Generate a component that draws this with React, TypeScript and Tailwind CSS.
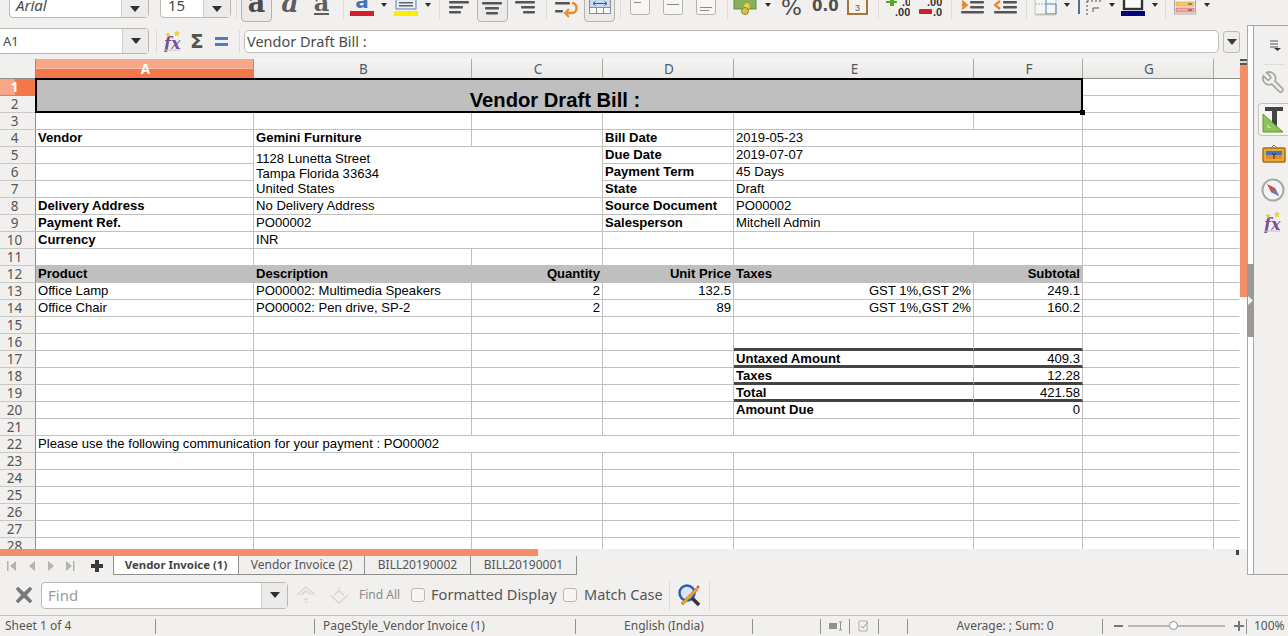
import React from 'react';

// Calc window: toolbars, formula bar, sheet grid, sheet tabs, find bar, status bar

type Cell = { t?: string; cs?: number; rs?: number; b?: boolean; r?: boolean; fill?: boolean; heavy?: boolean; multi?: boolean };

const COLS = [
  { n: 'A', w: 218 },
  { n: 'B', w: 218 },
  { n: 'C', w: 131 },
  { n: 'D', w: 131 },
  { n: 'E', w: 240 },
  { n: 'F', w: 109 },
  { n: 'G', w: 131 },
  { n: '', w: 26 },
];

const e: Cell = {};
const G: Cell[] = [e, e];

const ROWS: Record<number, Cell[]> = {
  3: [e, e, e, e, e, e, ...G],
  4: [{ t: 'Vendor', b: true }, { t: 'Gemini Furniture', b: true }, e, { t: 'Bill Date', b: true }, { t: '2019-05-23', cs: 2 }, ...G],
  5: [e, { t: '1128 Lunetta Street\nTampa Florida 33634\nUnited States', cs: 2, rs: 3, multi: true }, { t: 'Due Date', b: true }, { t: '2019-07-07', cs: 2 }, ...G],
  6: [e, { t: 'Payment Term', b: true }, { t: '45 Days', cs: 2 }, ...G],
  7: [e, { t: 'State', b: true }, { t: 'Draft', cs: 2 }, ...G],
  8: [{ t: 'Delivery Address', b: true }, { t: 'No Delivery Address', cs: 2 }, { t: 'Source Document', b: true }, { t: 'PO00002', cs: 2 }, ...G],
  9: [{ t: 'Payment Ref.', b: true }, { t: 'PO00002', cs: 2 }, { t: 'Salesperson', b: true }, { t: 'Mitchell Admin', cs: 2 }, ...G],
  10: [{ t: 'Currency', b: true }, { t: 'INR', cs: 2 }, e, e, e, ...G],
  11: [e, e, e, e, e, e, ...G],
  12: [
    { t: 'Product', b: true, fill: true },
    { t: 'Description', b: true, fill: true },
    { t: 'Quantity', b: true, r: true, fill: true },
    { t: 'Unit Price', b: true, r: true, fill: true },
    { t: 'Taxes', b: true, fill: true },
    { t: 'Subtotal', b: true, r: true, fill: true },
    ...G,
  ],
  13: [{ t: 'Office Lamp' }, { t: 'PO00002: Multimedia Speakers' }, { t: '2', r: true }, { t: '132.5', r: true }, { t: 'GST 1%,GST 2%', r: true }, { t: '249.1', r: true }, ...G],
  14: [{ t: 'Office Chair' }, { t: 'PO00002: Pen drive, SP-2' }, { t: '2', r: true }, { t: '89', r: true }, { t: 'GST 1%,GST 2%', r: true }, { t: '160.2', r: true }, ...G],
  15: [e, e, e, e, e, e, ...G],
  16: [e, e, e, e, { heavy: true }, { heavy: true }, ...G],
  17: [e, e, e, e, { t: 'Untaxed Amount', b: true, heavy: true }, { t: '409.3', r: true, heavy: true }, ...G],
  18: [e, e, e, e, { t: 'Taxes', b: true, heavy: true }, { t: '12.28', r: true, heavy: true }, ...G],
  19: [e, e, e, e, { t: 'Total', b: true, heavy: true }, { t: '421.58', r: true, heavy: true }, ...G],
  20: [e, e, e, e, { t: 'Amount Due', b: true }, { t: '0', r: true }, ...G],
  21: [e, e, e, e, e, e, ...G],
  22: [{ t: 'Please use the following communication for your payment : PO00002', cs: 6 }, ...G],
};

function Sep({ className }: { className: string }) {
  return <div className={`w-px h-[19px] shrink-0 bg-[#dcdbd8] ${className}`} />;
}

function Ic({ w, className, children }: { w: number; className?: string; children: React.ReactNode }) {
  return (
    <svg width={w} height={24} viewBox={`0 0 ${w} 24`} className={`shrink-0 ${className ?? ''}`}>
      {children}
    </svg>
  );
}

function Arrow({ className }: { className: string }) {
  return (
    <Ic w={8} className={className}>
      <path d="M1 3h6L4 7z" fill="#2e2e2e" />
    </Ic>
  );
}

function Active({ className, children }: { className: string; children: React.ReactNode }) {
  return <div className={`relative shrink-0 w-[31px] h-[23px] -mt-px rounded-b-[4px] border border-[#b4b3b0] bg-[#ebeae8] ${className}`}>{children}</div>;
}

function Lines({ w, xs }: { w: number; xs: [number, number][] }) {
  return (
    <Ic w={w}>
      {xs.map(([x, l], i) => (
        <rect key={i} x={x} y={1 + i * 5} width={l} height={2.4} rx={1} fill="#555" />
      ))}
    </Ic>
  );
}

function VBox({ y, l }: { y: number; l: number }) {
  return (
    <Ic w={20}>
      <rect x={0.5} y={-4} width={19} height={18.5} rx={2} fill="#f7f6f5" stroke="#b3b2af" />
      <rect x={4} y={y} width={l} height={1} fill="#8a8a8a" />
      {y > 4 && <rect x={4} y={y + 3} width={l - 3} height={1} fill="#8a8a8a" />}
    </Ic>
  );
}

function FxIcon() {
  return (
    <svg width={20} height={22} viewBox="0 0 20 22" className="shrink-0">
      <path d="M5 2l.8 1.8 1.9.2-1.4 1.3.4 1.9L5 6.2 3.3 7.2l.4-1.9L2.3 4l1.9-.2z" fill="#e8c93a" />
      <path d="M14 0l1 2.2 2.4.3-1.8 1.6.5 2.4L14 5.3l-2.1 1.2.5-2.4-1.8-1.6 2.4-.3z" fill="#e8d33a" />
      <text x={1} y={19} fontFamily="'DejaVu Serif', serif" fontStyle="italic" fontWeight="bold" fontSize={16} fill="#7b4e98">
        fx
      </text>
      <rect x={1} y={19.6} width={16} height={1} fill="#c9bdd0" />
    </svg>
  );
}

function Toolbar() {
  return (
    <div className="flex items-start h-[25px] shrink-0 overflow-hidden">
      <div className="ml-[9px] -mt-[6px] flex w-[140px] h-[24px] shrink-0 rounded-[4px] border border-[#b9b8b5] bg-white">
        <span className="flex-1 pl-[6px] pt-[1px] text-[15px] italic leading-[18px] text-[#4a4a4a]">Arial</span>
        <span className="flex w-[27px] items-center justify-center border-l border-[#cfcecb] bg-[#ecebe9] pt-[6px]">
          <svg width={10} height={6}><path d="M0 0h10L5 6z" fill="#2e2e2e" /></svg>
        </span>
      </div>
      <div className="ml-[11px] -mt-[6px] flex w-[71px] h-[24px] shrink-0 rounded-[4px] border border-[#b9b8b5] bg-white">
        <span className="flex-1 pl-[7px] pt-[1px] text-[15px] leading-[18px] text-[#4a4a4a]">15</span>
        <span className="flex w-[27px] items-center justify-center border-l border-[#cfcecb] bg-[#ecebe9] pt-[6px]">
          <svg width={10} height={6}><path d="M0 0h10L5 6z" fill="#2e2e2e" /></svg>
        </span>
      </div>
      <Sep className="ml-[5px]" />
      <Active className="ml-[4px]">
        <svg width={29} height={22} className="block">
          <text x={14.5} y={12} textAnchor="middle" fontFamily="'DejaVu Serif', serif" fontWeight="bold" fontSize={27} fill="#4b4b4b">a</text>
        </svg>
      </Active>
      <Ic w={31} className="ml-[3px]">
        <text x={15} y={12} textAnchor="middle" fontFamily="'DejaVu Serif', serif" fontStyle="italic" fontWeight="bold" fontSize={27} fill="#5e5e5e">a</text>
      </Ic>
      <Ic w={31}>
        <text x={15.5} y={11} textAnchor="middle" fontFamily="'DejaVu Serif', serif" fontWeight="bold" fontSize={24} fill="#5e5e5e">a</text>
        <rect x={8} y={13} width={15} height={2} fill="#5e5e5e" />
      </Ic>
      <Sep className="ml-[6px]" />
      <Ic w={24} className="ml-[6px]">
        <text x={12} y={8} textAnchor="middle" fontFamily="'DejaVu Sans', sans-serif" fontWeight="bold" fontSize={20} fill="#3f78b8">a</text>
        <rect x={0} y={11} width={24} height={5} fill="#d3202c" />
      </Ic>
      <Arrow className="ml-[6px]" />
      <Ic w={24} className="ml-[6px]">
        <rect x={2} y={-3} width={20} height={12} fill="#e8eef5" stroke="#5d82ab" />
        <rect x={5} y={2} width={14} height={1.5} fill="#666" />
        <rect x={5} y={5} width={14} height={1.5} fill="#666" />
        <rect x={0} y={11} width={24} height={5} fill="#ffec00" />
      </Ic>
      <Arrow className="ml-[6px]" />
      <Sep className="ml-[7px]" />
      <div className="ml-[9px]"><Lines w={20} xs={[[0, 20], [0, 14], [0, 12]]} /></div>
      <Active className="ml-[8px]">
        <div className="pl-[4px] pt-px"><Lines w={20} xs={[[0, 20], [3, 14], [4, 12]]} /></div>
      </Active>
      <div className="ml-[7px]"><Lines w={20} xs={[[0, 20], [6, 14], [8, 12]]} /></div>
      <Sep className="ml-[11px]" />
      <Ic w={23} className="ml-[8px]">
        <rect x={0} y={2} width={15} height={2.4} rx={1} fill="#555" />
        <rect x={0} y={10} width={8} height={2.4} rx={1} fill="#555" />
        <path d="M17 3c6 0 6 10 0 10h-5" fill="none" stroke="#e8872c" strokeWidth={2.4} />
        <path d="M14 9l-4 4 4 4" fill="none" stroke="#e8872c" strokeWidth={2} />
      </Ic>
      <Active className="ml-[6px]">
        <svg width={29} height={22} className="block">
          <rect x={4.5} y={-3} width={21} height={16.5} fill="#f8f8f8" stroke="#8f8f8f" />
          <rect x={5} y={-2} width={20} height={9} fill="#c8daef" />
          <path d="M5 7.5h20M11.5 8v6M18.5 8v6" stroke="#8f8f8f" />
          <path d="M8 3.5h14M8 3.5l2.5-2M8 3.5l2.5 2M22 3.5l-2.5-2M22 3.5l-2.5 2" stroke="#2a62a8" fill="none" />
        </svg>
      </Active>
      <Sep className="ml-[5px]" />
      <div className="ml-[9px]"><VBox y={2} l={7} /></div>
      <div className="ml-[13px]"><VBox y={4} l={12} /></div>
      <div className="ml-[13px]"><VBox y={7} l={12} /></div>
      <Sep className="ml-[11px]" />
      <Ic w={24} className="ml-[5px]">
        <rect x={1} y={-4} width={22} height={13} fill="#86b35a" stroke="#5f8f3a" />
        <circle cx={14} cy={6} r={3.5} fill="#e3d25a" stroke="#a89a32" />
        <circle cx={12} cy={11} r={3.5} fill="#d8c24a" stroke="#93822a" />
      </Ic>
      <Arrow className="ml-[7px]" />
      <span className="ml-[9px] w-[23px] shrink-0 -mt-[2px] text-[22px] leading-[20px] text-[#4a4a4a] [font-family:'DejaVu_Sans',sans-serif]">%</span>
      <span className="ml-[8px] w-[24px] shrink-0 -mt-[1px] text-[15px] font-bold leading-[14px] text-[#4f4f4f] [font-family:'DejaVu_Sans',sans-serif]">0.0</span>
      <Ic w={21} className="ml-[11px]">
        <rect x={1} y={-4} width={19} height={18} fill="#f4f2ee" stroke="#a5763c" strokeWidth={2} />
        <text x={10.5} y={11} textAnchor="middle" fontSize={9} fontFamily="'Liberation Sans', sans-serif" fill="#555">3</text>
      </Ic>
      <Sep className="ml-[10px]" />
      <Ic w={24} className="ml-[7px]">
        <path d="M4 -2h4v3h-4zM0 1h11v2H8v3H4V3H0z" fill="#56a820" />
        <text x={16} y={6} fontSize={11} fontFamily="'Liberation Sans', sans-serif" fill="#333" fontWeight="bold">.0</text>
        <text x={9} y={16} fontSize={11} fontFamily="'Liberation Sans', sans-serif" fill="#333" fontWeight="bold">.00</text>
      </Ic>
      <Ic w={24} className="ml-[8px]">
        <text x={9} y={6} fontSize={11} fontFamily="'Liberation Sans', sans-serif" fill="#333" fontWeight="bold">.00</text>
        <rect x={1} y={9} width={13} height={5} rx={1} fill="#cf1f27" />
        <text x={15} y={16} fontSize={11} fontFamily="'Liberation Sans', sans-serif" fill="#333" fontWeight="bold">.0</text>
      </Ic>
      <Sep className="ml-[9px]" />
      <Ic w={24} className="ml-[9px]">
        <path d="M1 1l5 4-5 4M1 4l3 1-3 1" fill="none" stroke="#e8872c" strokeWidth={2} />
        <rect x={9} y={1} width={14} height={2.4} rx={1} fill="#555" />
        <rect x={9} y={6} width={14} height={2.4} rx={1} fill="#555" />
        <rect x={0} y={11} width={23} height={2.4} rx={1} fill="#555" />
      </Ic>
      <Ic w={24} className="ml-[9px]">
        <path d="M6 1L1 5l5 4" fill="none" stroke="#e8872c" strokeWidth={2.4} />
        <rect x={9} y={1} width={14} height={2.4} rx={1} fill="#555" />
        <rect x={9} y={6} width={14} height={2.4} rx={1} fill="#555" />
        <rect x={0} y={11} width={23} height={2.4} rx={1} fill="#555" />
      </Ic>
      <Sep className="ml-[8px]" />
      <Ic w={23} className="ml-[7px]">
        <rect x={1} y={-4} width={21} height={18} fill="#f4f6f3" stroke="#c4c4c0" />
        <path d="M12 -4v18M12 14h10V4H12" fill="none" stroke="#4f83b8" />
        <path d="M1 4h10" stroke="#9ab4cf" strokeDasharray="2 1" />
        <rect x={1} y={14} width={21} height={1.4} fill="#bdbdb9" />
      </Ic>
      <Arrow className="ml-[6px]" />
      <div className="ml-[7px] w-[2px] h-[14px] shrink-0 bg-[#4f6f96]" />
      <Ic w={18} className="ml-[6px]">
        <path d="M1 1h16M1 1v14" fill="none" stroke="#444" strokeDasharray="2 2" />
        <path d="M7 12V8h6" fill="none" stroke="#555" />
      </Ic>
      <Arrow className="ml-[4px]" />
      <Ic w={24} className="ml-[5px]">
        <rect x={3} y={-4} width={18} height={13} fill="#fafafa" stroke="#333" strokeWidth={2.4} />
        <rect x={0} y={11} width={24} height={5} fill="#000080" />
      </Ic>
      <Arrow className="ml-[6px]" />
      <Sep className="ml-[6px]" />
      <Ic w={22} className="ml-[8px]">
        <rect x={0.5} y={-3} width={21} height={17} fill="#f5f5f3" stroke="#a9a9a6" />
        <rect x={2} y={2} width={18} height={4} fill="#f7c66d" stroke="#e39a2f" strokeWidth={0.6} />
        <rect x={2} y={8} width={18} height={4} fill="#f7a7a7" stroke="#d9534f" strokeWidth={0.6} />
        <rect x={14} y={3.5} width={4} height={1} fill="#444" />
        <rect x={14} y={9.5} width={4} height={1} fill="#444" />
      </Ic>
      <Arrow className="ml-[7px]" />
    </div>
  );
}

function FormulaBar() {
  return (
    <div className="flex items-start h-[34px] shrink-0 pt-[3px]">
      <div className="flex w-[149px] h-[26px] shrink-0 rounded-r-[4px] border border-l-0 border-[#b9b8b5] bg-white">
        <span className="flex-1 pl-[3px] text-[13px] leading-[24px] text-[#4a4a4a]">A1</span>
        <span className="flex w-[26px] items-center justify-center border-l border-[#cfcecb] bg-[#ecebe9]">
          <svg width={10} height={6}><path d="M0 0h10L5 6z" fill="#2e2e2e" /></svg>
        </span>
      </div>
      <Sep className="ml-[7px] mt-[2px] !h-[23px]" />
      <div className="ml-[6px] mt-[2px]"><FxIcon /></div>
      <span className="ml-[7px] w-[14px] shrink-0 text-[20px] font-bold leading-[26px] text-[#4f5650] [font-family:'DejaVu_Sans',sans-serif]">Σ</span>
      <svg width={14} height={12} className="ml-[11px] mt-[8px] shrink-0">
        <rect y={1} width={13} height={3} fill="#4f80b5" />
        <rect y={7} width={13} height={3} fill="#4f80b5" />
      </svg>
      <Sep className="ml-[10px] mt-[2px] !h-[23px]" />
      <div className="ml-[4px] mt-[2px] flex-1 h-[23px] rounded-[5px] border border-[#bdbcb9] bg-white pl-[2px] text-[14.5px] leading-[21px] text-[#4a4a4a]">
        Vendor Draft Bill :
      </div>
      <div className="ml-[4px] mr-[7px] mt-[3px] flex w-[17px] h-[22px] shrink-0 items-center justify-center rounded-[3px] border border-[#bdbcb9] bg-[#eeedeb]">
        <svg width={10} height={6}><path d="M0 0h10L5 6z" fill="#3a3a3a" /></svg>
      </div>
    </div>
  );
}

function RowHead({ n }: { n: number }) {
  const on = n === 1;
  return (
    <td
      className={`h-[17px] p-0 pr-[6px] text-center align-top text-[13.5px] leading-[16px] border-r border-b [font-family:'Noto_Sans',sans-serif] ${
        on
          ? 'font-bold text-white border-[#f2774a] bg-[linear-gradient(90deg,#f7a788_0,#f7a788_15px,#f2774a_15px)]'
          : 'text-[#555] border-r-[#8f8f8d] border-b-[#c9c8c5] bg-[#f1f0ee]'
      }`}
    >
      {n}
    </td>
  );
}

function DataCell({ c, last }: { c: Cell; last: boolean }) {
  const border = c.heavy ? 'border-b-[3px] border-b-[#444]' : c.fill ? 'border-b-[#bfbfbf]' : 'border-b-[#c0c0c0]';
  const right = last ? 'border-r-transparent' : c.fill ? 'border-r-[#bfbfbf]' : 'border-r-[#c0c0c0]';
  return (
    <td
      colSpan={c.cs}
      rowSpan={c.rs}
      className={`h-[17px] p-0 px-[2px] overflow-hidden whitespace-pre text-[13.1px] text-black border-r border-b ${border} ${right} ${
        c.multi ? 'align-middle pt-[2px] leading-[15px]' : 'align-top leading-[16px]'
      } ${c.b ? 'font-bold' : ''} ${c.r ? 'text-right' : ''} ${c.fill ? 'bg-[#bfbfbf]' : 'bg-white'}`}
    >
      {c.heavy ? <div className="h-[14px]">{c.t}</div> : c.t}
    </td>
  );
}

function Sheet() {
  const nums = Array.from({ length: 26 }, (_, i) => i + 3);
  return (
    <div className="flex h-[490px] shrink-0">
      <div className="w-[1240px] overflow-hidden bg-white">
        <table className="table-fixed border-separate border-spacing-0 w-[1240px] [font-family:'Liberation_Sans',sans-serif]">
          <colgroup>
            <col className="w-[36px]" />
            {COLS.map((c, i) => (
              <col key={i} style={{ width: c.w }} />
            ))}
          </colgroup>
          <thead>
            <tr>
              <th className="h-[20px] p-0 border-r border-b border-[#8f8f8d] bg-[#f1f0ee]" />
              {COLS.map((c) => (
                <th
                  key={c.n}
                  className={`h-[20px] p-0 pl-[2px] text-center text-[13.5px] leading-[18px] border-b border-b-[#8f8f8d] [font-family:'Noto_Sans',sans-serif] ${
                    c.n === 'A'
                      ? 'font-bold text-white border-r border-r-[#f2774a] bg-[linear-gradient(180deg,#f7a788_0,#f7a788_9px,#fbd3c2_10px,#f2774a_10px)]'
                      : c.n === ''
                        ? 'bg-[#f1f0ee]'
                        : 'font-normal text-[#4d5a68] border-r border-r-[#a9a8a5] bg-[linear-gradient(180deg,#f5f4f2,#e9e8e6)]'
                  }`}
                >
                  {c.n}
                </th>
              ))}
            </tr>
          </thead>
          <tbody>
            <tr>
              <RowHead n={1} />
              <td colSpan={6} rowSpan={2} className="relative p-0 pr-[9px] pt-[7px] text-center align-middle bg-[#bfbfbf] text-[20.2px] font-bold leading-[24px] text-black">
                Vendor Draft Bill :
                <div className="absolute -left-px -top-px right-0 bottom-0 border-2 border-black" />
                <div className="absolute -right-[2px] -bottom-[2px] w-[5px] h-[5px] bg-black" />
              </td>
              <DataCell c={e} last={false} />
              <DataCell c={e} last />
            </tr>
            <tr>
              <RowHead n={2} />
              <DataCell c={e} last={false} />
              <DataCell c={e} last />
            </tr>
            {nums.map((n) => {
              const cells = ROWS[n] ?? [e, e, e, e, e, e, e, e];
              return (
                <tr key={n}>
                  <RowHead n={n} />
                  {cells.map((c, i) => (
                    <DataCell key={i} c={c} last={i === cells.length - 1} />
                  ))}
                </tr>
              );
            })}
          </tbody>
        </table>
      </div>
      <div className="relative w-[7px] bg-white">
        <div className="h-[6px] bg-[#d8d7d4] border-y-2 border-[#555]" />
        <div className="h-[232px] bg-[#f28f68]" />
      </div>
    </div>
  );
}

function TabNav({ d, className }: { d: string; className: string }) {
  return (
    <svg width={10} height={12} className={`shrink-0 ${className}`}>
      <path d={d} fill="#b4b3b0" />
    </svg>
  );
}

function SheetTabs() {
  return (
    <div className="flex h-[19px] shrink-0 items-center [font-family:'Noto_Sans',sans-serif]">
      <TabNav d="M0 1h1.5v10H0zM9 1v10L3 6z" className="ml-[7px]" />
      <TabNav d="M8 1v10L2 6z" className="ml-[10px]" />
      <TabNav d="M2 1v10l6-5z" className="ml-[9px]" />
      <TabNav d="M1 1v10l6-5zM8 1h1.5v10H8z" className="ml-[9px]" />
      <svg width={14} height={14} className="ml-[15px] shrink-0">
        <path d="M5 1h4v4h4v4H9v4H5V9H1V5h4z" fill="#3a3a3a" />
      </svg>
      <div className="ml-[9px] flex w-[126px] h-[19px] shrink-0 items-center justify-center border-x border-b border-[#8f8f8d] bg-white text-[11.4px] font-bold text-[#444]">
        Vendor Invoice (1)
      </div>
      <div className="flex w-[126px] h-[19px] shrink-0 items-center justify-center border-r border-b border-[#8f8f8d] text-[12px] text-[#555]">Vendor Invoice (2)</div>
      <div className="flex w-[106px] h-[19px] shrink-0 items-center justify-center border-r border-b border-[#8f8f8d] text-[12px] text-[#555]">BILL20190002</div>
      <div className="flex w-[106px] h-[19px] shrink-0 items-center justify-center border-r border-b border-[#8f8f8d] text-[12px] text-[#555]">BILL20190001</div>
    </div>
  );
}

function Sidebar() {
  return (
    <div className="flex flex-col w-[34px] border-y border-[#a9a8a5]">
      <svg width={34} height={12} className="shrink-0 mt-[14px]">
        <path d="M16 1h8M16 4h8M16 7h8" stroke="#4a5560" strokeWidth={1.2} />
        <path d="M20 8h7l-3.5 3z" fill="#2e3a48" />
      </svg>
      <div className="ml-[9px] mt-[12px] h-px w-[22px] bg-[#dddcd9]" />
      <svg width={34} height={28} viewBox="0 0 34 28" className="shrink-0 mt-[4px]">
        <g transform="translate(32 1) scale(-1.05 1.05)">
          <path
            d="M14.7 6.3a1 1 0 0 0 0 1.4l1.6 1.6a1 1 0 0 0 1.4 0l3.77-3.77a6 6 0 0 1-7.94 7.94l-6.91 6.91a2.12 2.12 0 0 1-3-3l6.91-6.91a6 6 0 0 1 7.94-7.94l-3.76 3.76z"
            fill="#f1f0ee"
            stroke="#a8a8a5"
            strokeWidth={1.7}
          />
        </g>
      </svg>
      <div className="ml-[4px] mt-[6px] h-[33px] rounded-l-[4px] border border-r-0 border-[#c3c2bf] bg-[#f6f5f4]">
        <svg width={30} height={31}>
          <rect x={6} y={3} width={18} height={4} fill="#444" />
          <rect x={13} y={3} width={5} height={20} fill="#444" />
          <path d="M4 10v18h20z" fill="#8fc25a" stroke="#5f9a2e" />
          <path d="M8 20v4h5z" fill="#b9dc94" />
        </svg>
      </div>
      <svg width={34} height={26} className="shrink-0 mt-[7px]">
        <path d="M17 5l3-3 3 3" fill="none" stroke="#777" />
        <rect x={9} y={5} width={22} height={14} rx={1} fill="#e9a93c" stroke="#a56d1a" strokeWidth={1.5} />
        <rect x={12} y={8} width={16} height={8} fill="#3f78b8" />
        <rect x={12} y={12} width={16} height={4} fill="#e8872c" />
        <path d="M20 16v-5M18 10l2 2 2-2" stroke="#3a2a1a" fill="none" />
      </svg>
      <svg width={34} height={26} className="shrink-0 mt-[8px]">
        <circle cx={19} cy={13} r={10.5} fill="#f4f4f3" stroke="#a8a8a5" strokeWidth={2} />
        <path d="M13 7l4 8 8 4-4-8z" fill="#d94a4a" />
        <path d="M17 15l8 4-4-8z" fill="#5b7fbf" />
      </svg>
      <div className="ml-[9px] mt-[8px]"><FxIcon /></div>
    </div>
  );
}

function FindBar() {
  return (
    <div className="flex items-center h-[41px] shrink-0 border-b border-[#c4c3c0] [font-family:'Noto_Sans',sans-serif]">
      <svg width={18} height={18} className="ml-[15px] shrink-0">
        <path d="M3 1l6 5.5L15 1l2 2-5.5 6L17 15l-2 2-6-5.5L3 17l-2-2 5.5-6L1 3z" fill="#777" stroke="#666" strokeWidth={0.5} />
      </svg>
      <div className="ml-[8px] flex w-[247px] h-[27px] shrink-0 rounded-[4px] border border-[#b9b8b5] bg-white">
        <span className="flex-1 pl-[6px] text-[15px] leading-[25px] text-[#9b9b9b]">Find</span>
        <span className="flex w-[26px] items-center justify-center border-l border-[#cfcecb] bg-[#ecebe9]">
          <svg width={10} height={6}><path d="M0 0h10L5 6z" fill="#2e2e2e" /></svg>
        </span>
      </div>
      <svg width={20} height={20} className="ml-[8px] shrink-0">
        <path d="M1 10l9-8 9 8M5 10l5-4 5 4M8 14h4M9 17h2" fill="none" stroke="#d8d7d4" strokeWidth={1.5} />
      </svg>
      <svg width={20} height={20} className="ml-[13px] shrink-0">
        <path d="M1 10l9 8 9-8M5 10l5-4 5 4M8 6h4M9 3h2" fill="none" stroke="#d8d7d4" strokeWidth={1.5} />
      </svg>
      <span className="ml-[10px] w-[45px] shrink-0 text-[12px] text-[#8b8b8b]">Find All</span>
      <span className="ml-[7px] w-[14px] h-[14px] shrink-0 rounded-[3px] border border-[#b9b8b5] bg-[#f7f6f5]" />
      <span className="ml-[6px] w-[127px] shrink-0 text-[14.6px] text-[#555] whitespace-nowrap">Formatted Display</span>
      <span className="ml-[5px] w-[14px] h-[14px] shrink-0 rounded-[3px] border border-[#b9b8b5] bg-[#f7f6f5]" />
      <span className="ml-[7px] w-[80px] shrink-0 text-[14.5px] text-[#555] whitespace-nowrap">Match Case</span>
      <div className="ml-[5px] w-px h-[29px] bg-[#dcdbd8]" />
      <svg width={24} height={24} className="ml-[7px] shrink-0">
        <circle cx={10} cy={10} r={7.5} fill="#dce6f2" stroke="#2f5fa8" strokeWidth={2.5} />
        <path d="M15 15l7 7" stroke="#333" strokeWidth={3.5} />
        <path d="M4 20L19 5l2 2L6 22z" fill="#f0a030" stroke="#b86f10" strokeWidth={0.6} />
        <circle cx={21} cy={4} r={1.5} fill="#e0503c" />
      </svg>
      <div className="ml-[8px] w-px h-[29px] bg-[#dcdbd8]" />
    </div>
  );
}

function StatusBar() {
  const cell = 'flex h-[15px] shrink-0 items-center border-r border-[#8f8f8d] whitespace-nowrap';
  return (
    <div className="flex items-center h-[20px] shrink-0 text-[12px] text-[#555] [font-family:'Noto_Sans',sans-serif]">
      <div className={`${cell} w-[156px] pl-[5px]`}>Sheet 1 of 4</div>
      <div className={`${cell} w-[159px]`} />
      <div className={`${cell} w-[261px] pl-[8px]`}>PageStyle_Vendor Invoice (1)</div>
      <div className={`${cell} w-[177px] justify-center`}>English (India)</div>
      <div className={`${cell} w-[68px]`} />
      <div className={`${cell} w-[29px] justify-center`}>
        <svg width={13} height={10}>
          <rect y={2} width={8} height={6} fill="#8f8f8d" />
          <path d="M10 1h3M11.5 1v8M10 9h3" stroke="#8f8f8d" fill="none" />
        </svg>
      </div>
      <div className={`${cell} w-[29px] justify-center`}>
        <svg width={12} height={12}>
          <path d="M1 1h8v10H1z" fill="none" stroke="#b0afac" />
          <path d="M3 6l2 2 5-6" fill="none" stroke="#9a9a98" />
        </svg>
      </div>
      <div className={`${cell} w-[29px]`} />
      <div className={`${cell} w-[195px] justify-center`}>Average: ; Sum: 0</div>
      <div className={`${cell} w-[144px] pl-[11px]`}>
        <div className="w-[9px] h-[2px] bg-[#777]" />
        <div className="relative ml-[5px] w-[97px] h-[2px] bg-[#b9b8b5]">
          <div className="absolute left-[41px] -top-[4px] w-[9px] h-[9px] rounded-full border border-[#8f8f8d] bg-white" />
        </div>
        <svg width={10} height={10} className="ml-[9px] shrink-0">
          <path d="M4 0h2v4h4v2H6v4H4V6H0V4h4z" fill="#777" />
        </svg>
      </div>
      <div className="pl-[7px]">100%</div>
    </div>
  );
}

export default function App() {
  return (
    <div className="flex flex-col w-[1288px] h-[636px] overflow-hidden bg-[#f1f0ee] [font-family:'Noto_Sans',sans-serif]">
      <Toolbar />
      <div className="flex h-[550px] shrink-0">
        <div className="flex flex-col w-[1247px] shrink-0">
          <FormulaBar />
          <Sheet />
          <div className="relative flex h-[7px] shrink-0">
            <div className="w-[538px] bg-[#f28f68]" />
            <div className="absolute left-[1236px] top-[1px] w-[3px] h-[5px] bg-[#444]" />
          </div>
          <SheetTabs />
        </div>
        <div className="relative w-[7px] shrink-0 border border-[#a9a8a5] bg-white">
          <div className="absolute -left-px -right-px top-[238px] h-[73px] bg-[#9a9996]">
            <svg width={7} height={9} className="mt-[32px]"><path d="M1 0v9l5-4.5z" fill="#f5f5f5" /></svg>
          </div>
        </div>
        <Sidebar />
      </div>
      <FindBar />
      <StatusBar />
    </div>
  );
}
